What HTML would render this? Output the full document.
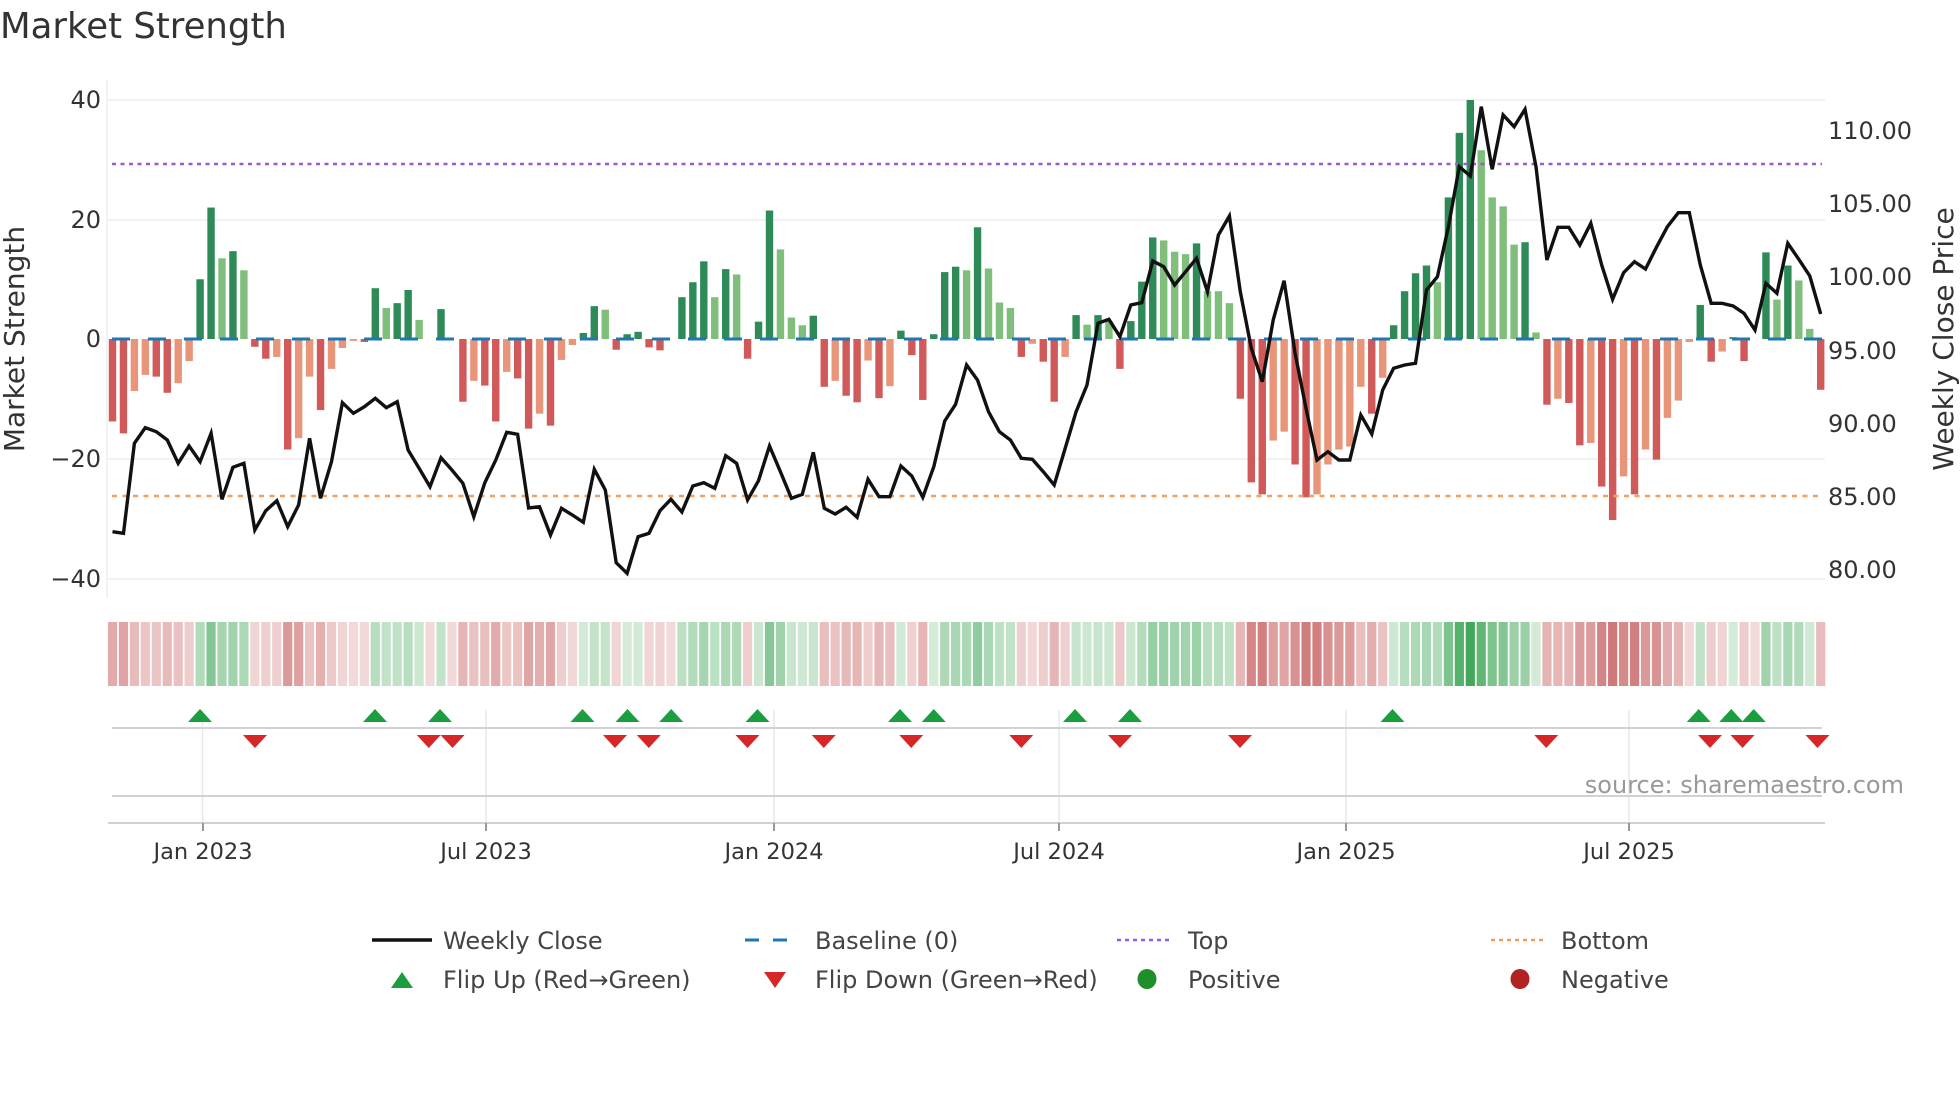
<!DOCTYPE html>
<html><head><meta charset="utf-8">
<style>
html,body{margin:0;padding:0;background:#fff;}
svg{display:block;font-family:"DejaVu Sans","Liberation Sans",sans-serif;}
</style></head>
<body>
<svg id="c" width="1960" height="1102" viewBox="0 0 1960 1102" xmlns="http://www.w3.org/2000/svg">
<rect width="1960" height="1102" fill="#fff"/>
<text x="0" y="38" font-size="35.5" fill="#333">Market Strength</text>
<g stroke="#eceef3" stroke-width="1.5">
<line x1="108" y1="100" x2="1825" y2="100"/>
<line x1="108" y1="220" x2="1825" y2="220"/>
<line x1="108" y1="459" x2="1825" y2="459"/>
<line x1="108" y1="579" x2="1825" y2="579"/>
<line x1="107" y1="80" x2="107" y2="598"/>
</g>
<g font-size="24" fill="#333" text-anchor="end">
<text x="101" y="108">40</text>
<text x="101" y="228">20</text>
<text x="101" y="347">0</text>
<text x="101" y="467">−20</text>
<text x="101" y="587">−40</text>
</g>
<g font-size="24" fill="#333">
<text x="1828" y="139">110.00</text>
<text x="1828" y="212">105.00</text>
<text x="1828" y="285">100.00</text>
<text x="1828" y="359">95.00</text>
<text x="1828" y="432">90.00</text>
<text x="1828" y="505">85.00</text>
<text x="1828" y="578">80.00</text>
</g>
<text transform="translate(24,339) rotate(-90)" font-size="28" fill="#333" text-anchor="middle">Market Strength</text>
<text transform="translate(1953,339) rotate(-90)" font-size="28" fill="#333" text-anchor="middle">Weekly Close Price</text>
<g id="bars"></g>
<line x1="112" y1="339" x2="1822" y2="339" stroke="#1f77b4" stroke-width="3" stroke-dasharray="18 18" id="base"/>
<line x1="112" y1="164" x2="1822" y2="164" stroke="#9b59d6" stroke-width="2.5" stroke-dasharray="4 4.5"/>
<line x1="112" y1="496" x2="1822" y2="496" stroke="#f0a060" stroke-width="2.5" stroke-dasharray="5 5.5"/>
<polyline id="price" fill="none" stroke="#111" stroke-width="3.4" stroke-linejoin="miter"/>
<g id="strip"></g>
<g stroke="#e6e8ee" stroke-width="1.5">
<line x1="202.5" y1="710" x2="202.5" y2="823"/>
<line x1="486" y1="710" x2="486" y2="823"/>
<line x1="774" y1="710" x2="774" y2="823"/>
<line x1="1059" y1="710" x2="1059" y2="823"/>
<line x1="1346" y1="710" x2="1346" y2="823"/>
<line x1="1629" y1="710" x2="1629" y2="823"/>
</g>
<line x1="112" y1="728" x2="1822" y2="728" stroke="#d0d2d6" stroke-width="2"/>
<line x1="112" y1="796" x2="1822" y2="796" stroke="#d0d2d6" stroke-width="2"/>
<line x1="108" y1="823" x2="1825" y2="823" stroke="#cfd1d5" stroke-width="2"/>
<g stroke="#999" stroke-width="2">
<line x1="203" y1="823" x2="203" y2="831"/><line x1="486" y1="823" x2="486" y2="831"/>
<line x1="774" y1="823" x2="774" y2="831"/><line x1="1059" y1="823" x2="1059" y2="831"/>
<line x1="1346" y1="823" x2="1346" y2="831"/><line x1="1629" y1="823" x2="1629" y2="831"/>
</g>
<g id="marks"></g>
<g font-size="22.5" fill="#333" text-anchor="middle">
<text x="203" y="859">Jan 2023</text>
<text x="486" y="859">Jul 2023</text>
<text x="774" y="859">Jan 2024</text>
<text x="1059" y="859">Jul 2024</text>
<text x="1346" y="859">Jan 2025</text>
<text x="1629" y="859">Jul 2025</text>
</g>
<text x="1904" y="793" font-size="24" fill="#999" text-anchor="end">source: sharemaestro.com</text>
<g font-size="24" fill="#444">
<line x1="372" y1="940" x2="432" y2="940" stroke="#111" stroke-width="3.5"/>
<text x="443" y="949">Weekly Close</text>
<line x1="745" y1="940" x2="800" y2="940" stroke="#1f77b4" stroke-width="3" stroke-dasharray="14 14"/>
<text x="815" y="949">Baseline (0)</text>
<line x1="1117" y1="940" x2="1172" y2="940" stroke="#9b59d6" stroke-width="2.5" stroke-dasharray="4 4"/>
<text x="1188" y="949">Top</text>
<line x1="1491" y1="940" x2="1546" y2="940" stroke="#f0a060" stroke-width="2.5" stroke-dasharray="4 4"/>
<text x="1561" y="949">Bottom</text>
<polygon points="391,988 413,988 402,972" fill="#1a9e3f"/>
<text x="443" y="988">Flip Up (Red→Green)</text>
<polygon points="764,972 786,972 775,988" fill="#d62728"/>
<text x="815" y="988">Flip Down (Green→Red)</text>
<ellipse cx="1147" cy="979" rx="9.5" ry="10" fill="#1f8f2a"/>
<text x="1188" y="988">Positive</text>
<ellipse cx="1520" cy="979" rx="9.5" ry="10" fill="#b22222"/>
<text x="1561" y="988">Negative</text>
</g>
</svg>
<script>
var NS="http://www.w3.org/2000/svg";
var B="R-13.8 R-15.8 S-8.7 S-6 R-6.3 R-9 S-7.4 S-3.7 D10 D22 L13.5 D14.7 L11.5 R-1.3 R-3.3 S-3 R-18.5 S-16.6 S-6.3 R-11.9 S-5 S-1.5 S-0.3 R-0.5 D8.5 L5.2 D6 D8.2 L3.2 L0 D5 L0 R-10.5 S-7 R-7.8 R-13.8 S-5.5 R-6.6 R-15 S-12.5 "+
"R-14.5 S-3.5 S-1 D1 D5.5 L4.9 R-1.8 D0.8 D1.2 R-1.4 R-1.9 L0 D7 D9.5 D13 L7 D11.7 L10.8 R-3.3 D2.9 D21.5 L15 L3.6 L2.3 D3.9 R-8 S-7 R-9.5 R-10.6 S-3.6 R-9.9 S-7.9 D1.4 R-2.7 R-10.2 D0.8 D11.2 D12.1 L11.5 D18.7 "+
"L11.8 L6.1 L5.2 R-3 S-0.8 R-3.8 R-10.5 S-3 D4 L2.4 D4 L3 R-5 D3 D9.6 D17 L16.5 L14.6 L14.2 D16 L8 L8 L6 R-10 R-24 R-26 S-17 S-15.5 R-21 R-26.5 S-26 S-21 S-18.5 S-18 S-8 R-12.5 S-6.5 D2.3 D8 D11 "+
"D12.3 L9.5 D23.7 D34.5 D40 L31.6 L23.7 L22.2 L15.8 D16.2 L1.1 R-11 S-10 R-10.7 R-17.8 S-17.4 R-24.7 R-30.3 S-23 R-26 S-18.5 R-20.2 S-13.2 S-10.3 S-0.5 D5.7 R-3.8 S-2.1 D0.3 R-3.7 L0 D14.5 L6.6 D12.3 L9.8 L1.7 R-8.5";
var P=[1325,1330,1060,1013,1025,1050,1120,1068,1115,1030,1228,1132,1120,1320,1262,1232,1310,1245,1045,1225,1115,938,970,950,925,953,935,1080,1135,1190,1103,1140,1180,1280,1178,1110,1027,1033,1254,1250,
1335,1255,1275,1297,1138,1200,1418,1450,1340,1330,1262,1228,1266,1188,1178,1195,1097,1120,1230,1172,1068,1145,1225,1213,1087,1255,1272,1252,1282,1168,1220,1220,1128,1158,1222,1130,993,943,825,870,
965,1025,1050,1105,1108,1145,1185,1075,965,885,700,688,740,645,638,513,530,585,545,505,605,435,378,605,775,875,690,572,790,955,1110,1085,1110,1110,975,1032,900,835,825,820,
600,560,410,230,258,50,238,75,110,58,230,510,412,412,465,400,525,628,548,515,537,472,410,368,368,525,640,640,648,670,720,580,610,460,508,558,672];
var col={D:"#2e8b57",L:"#7fbf7b",R:"#d05a5a",S:"#e8957a"};
var toks=B.split(" ");
var bars=document.getElementById("bars"),strip=document.getElementById("strip");
function mix(a,b,t){return "rgb("+[0,1,2].map(function(k){return Math.round(a[k]+(b[k]-a[k])*t)}).join(",")+")";}
for(var i=0;i<toks.length;i++){
 var t=toks[i][0],v=parseFloat(toks[i].slice(1));
 var cx=112.5+i*10.95;
 if(Math.abs(v)>0.05){
  var y0=339,y1=339-v*5.975;
  var r=document.createElementNS(NS,"rect");
  r.setAttribute("x",cx-3.7);r.setAttribute("width",7.4);
  r.setAttribute("y",Math.min(y0,y1));r.setAttribute("height",Math.abs(y1-y0));
  r.setAttribute("fill",col[t]);bars.appendChild(r);
 }
 var s=document.createElementNS(NS,"rect");
 s.setAttribute("x",cx-4.6);s.setAttribute("width",9.2);s.setAttribute("y",622);s.setAttribute("height",64);
 var c;
 if(v>0){c=mix([214,236,218],[66,168,90],Math.min(1,v/40));}
 else{c=mix([243,218,218],[208,120,120],Math.min(1,-v/28));}
 s.setAttribute("fill",c);strip.appendChild(s);
}
var pts=[];for(var j=0;j<P.length;j++){pts.push((112.5+j*10.95).toFixed(1)+","+(90+P[j]/3).toFixed(1));}
document.getElementById("price").setAttribute("points",pts.join(" "));
var up=[160,300,352,466,502,537,606,720,747,860,904,1114,1359,1385,1403];
var dn=[204,343,362,492,519,598,659,729,817,896,992,1237,1368,1394,1454];
var m=document.getElementById("marks");
up.forEach(function(x){x*=1.25;var p=document.createElementNS(NS,"polygon");p.setAttribute("points",(x-12)+",722 "+(x+12)+",722 "+x+",709");p.setAttribute("fill","#1a9e3f");m.appendChild(p);});
dn.forEach(function(x){x*=1.25;var p=document.createElementNS(NS,"polygon");p.setAttribute("points",(x-12)+",735 "+(x+12)+",735 "+x+",748");p.setAttribute("fill","#d62728");m.appendChild(p);});
</script>
</body></html>
